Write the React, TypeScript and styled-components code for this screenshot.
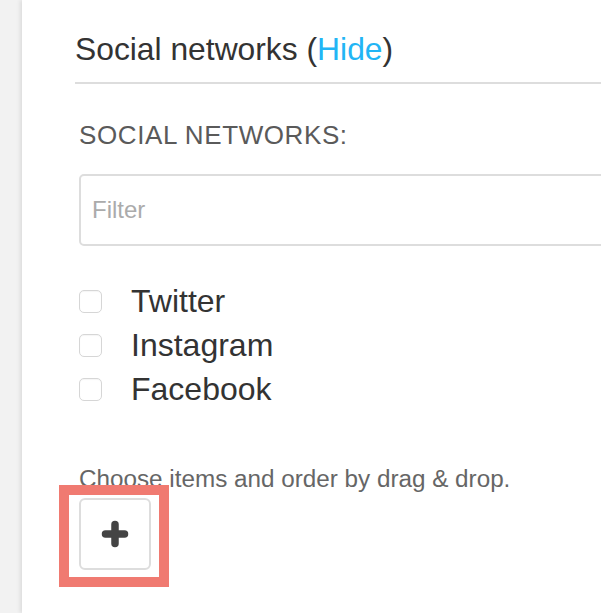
import React from "react";
import styled, { createGlobalStyle } from "styled-components";

const GlobalStyle = createGlobalStyle`
  html, body {
    margin: 0;
    padding: 0;
    background: #ffffff;
    overflow: hidden;
  }
  body {
    font-family: "Liberation Sans", Arial, Helvetica, sans-serif;
  }
  *, *::before, *::after { box-sizing: border-box; }
`;

const Page = styled.div`
  display: flex;
  min-height: 100vh;
  width: 100vw;
`;

const Sidebar = styled.aside`
  flex: 0 0 22px;
  background: #f2f2f2;
`;

const Main = styled.main`
  flex: 1;
  min-width: 0;
  position: relative;
  overflow: hidden;
  background: #ffffff;
  box-shadow: -2px 0 4px rgba(0, 0, 0, 0.09);
  padding: 29px 0 0 53px;
`;

const Header = styled.header`
  border-bottom: 2px solid #dddddd;
  padding-bottom: 13px;
`;

const Title = styled.h2`
  margin: 0;
  font-size: 31.8px;
  line-height: 40px;
  font-weight: 400;
  color: #333333;
`;

const TitleLink = styled.a`
  color: #22b5f5;
  text-decoration: none;
  cursor: pointer;
`;

const Body = styled.section`
  padding: 36px 0 0 4px;
  display: flex;
  flex-direction: column;
  align-items: flex-start;
`;

const FieldLabel = styled.label`
  font-size: 26px;
  line-height: 30px;
  letter-spacing: 0.6px;
  color: #5a5a5a;
  text-transform: uppercase;
`;

const FilterInput = styled.input`
  margin-top: 24px;
  width: calc(100% + 60px);
  height: 72px;
  border: 2px solid #dddddd;
  border-radius: 5px;
  padding: 0 0 0 11px;
  font-family: inherit;
  font-size: 24px;
  color: #333;
  outline: none;
  &::placeholder {
    color: #ababab;
  }
`;

const List = styled.ul`
  list-style: none;
  margin: 33px 0 0 0;
  padding: 0;
`;

const Item = styled.li`
  display: flex;
  align-items: center;
  height: 44px;
`;

const Box = styled.span`
  width: 23px;
  height: 23px;
  border: 1.5px solid #d6d6d6;
  border-radius: 5px;
  background: #fff;
  box-shadow: inset 0 1px 1px rgba(0, 0, 0, 0.04);
  flex: 0 0 auto;
`;

const ItemLabel = styled.span`
  margin-left: 29px;
  font-size: 32px;
  line-height: 44px;
  color: #333333;
`;

const Help = styled.p`
  margin: 53px 0 0 0;
  font-size: 24.25px;
  line-height: 30px;
  color: #666666;
`;

const AddWrap = styled.div`
  position: relative;
  margin-top: 4px;
  width: 72px;
  height: 72px;
  &::after {
    content: "";
    position: absolute;
    left: -20px;
    top: -13px;
    width: 110px;
    height: 102px;
    border: 10px solid #f07a71;
    pointer-events: none;
  }
`;

const AddButton = styled.button`
  width: 72px;
  height: 72px;
  border: 2px solid #dddddd;
  border-radius: 6px;
  background: #ffffff;
  display: flex;
  align-items: center;
  justify-content: center;
  padding: 0;
  cursor: pointer;
`;

const PlusIcon = () => (
  <svg width="28" height="28" viewBox="0 0 28 28" aria-hidden="true">
    <path
      d="M14 4.5 V23.5 M4.5 14 H23.5"
      stroke="#444444"
      strokeWidth="7.5"
      strokeLinecap="round"
      fill="none"
    />
  </svg>
);

const items = ["Twitter", "Instagram", "Facebook"];

export default function App() {
  return (
    <>
      <GlobalStyle />
      <Page>
        <Sidebar />
        <Main>
          <Header>
            <Title>
              Social networks (<TitleLink>Hide</TitleLink>)
            </Title>
          </Header>
          <Body>
            <FieldLabel>Social networks:</FieldLabel>
            <FilterInput placeholder="Filter" />
            <List>
              {items.map((it) => (
                <Item key={it}>
                  <Box />
                  <ItemLabel>{it}</ItemLabel>
                </Item>
              ))}
            </List>
            <Help>Choose items and order by drag &amp; drop.</Help>
            <AddWrap>
              <AddButton aria-label="Add">
                <PlusIcon />
              </AddButton>
            </AddWrap>
          </Body>
        </Main>
      </Page>
    </>
  );
}
